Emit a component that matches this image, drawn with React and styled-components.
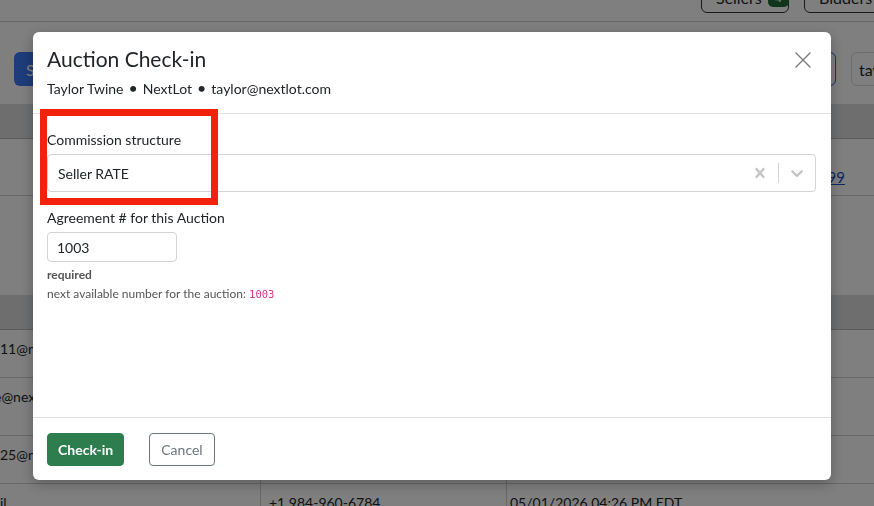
import React from 'react';
import styled, { createGlobalStyle } from 'styled-components';

const Global = createGlobalStyle`
  html, body { margin: 0; padding: 0; overflow: hidden; }
  body { font-family: Lato, "Open Sans", sans-serif; color: #212529; background: #fff; }
  * { box-sizing: border-box; }
`;

/* ---------- page behind the dialog ---------- */

const Page = styled.div`
  width: 874px;
  height: 506px;
  overflow: hidden;
`;

const TopBar = styled.div`
  height: 22px;
  border-bottom: 1px solid #d0d0d0;
  display: flex;
  justify-content: flex-end;
  align-items: flex-end;
  gap: 15px;
  padding-bottom: 8px;
  margin-right: -40px;
  overflow: hidden;
`;

const PillButton = styled.div`
  height: 32px;
  flex: none;
  padding: 0 8px 0 14px;
  border: 1px solid #333;
  border-radius: 6px;
  display: flex;
  align-items: center;
  gap: 6px;
  font-size: 16px;
  width: ${p => p.$w}px;
`;

const Badge = styled.span`
  background: #1e6b3a;
  color: #fff;
  border-radius: 5px;
  font-size: 12px;
  font-weight: 700;
  padding: 2px 7px;
`;

const Controls = styled.div`
  margin-top: 30px;
  height: 34px;
  display: flex;
  align-items: stretch;
  padding-left: 14px;
  margin-right: -60px;
`;

const PrimaryButton = styled.div`
  background: #3a78f2;
  color: #fff;
  border-radius: 6px;
  padding: 0 12px;
  display: flex;
  align-items: center;
  font-size: 16px;
`;

const Spacer = styled.div`
  flex: 1;
`;

const OutlineButton = styled.div`
  border: 1px solid #2f5fd0;
  border-radius: 6px;
  width: 90px;
`;

const SearchBox = styled.div`
  margin-left: 15px;
  width: 83px;
  border: 1px solid #d8d8d8;
  border-radius: 6px;
  padding: 0 7px;
  display: flex;
  align-items: center;
  font-size: 16px;
  overflow: hidden;
  white-space: nowrap;
`;

const TableHead = styled.div`
  height: 35px;
  background: #dcdddf;
  border-bottom: 1px solid #b8b8b8;
  margin-top: ${p => p.$top}px;
`;

const Row = styled.div`
  display: grid;
  grid-template-columns: 260px 246px 1fr;
  height: ${p => p.$h}px;
  border-bottom: 1px solid #d0d0d0;
  font-size: 14px;
`;

const Cell = styled.div`
  padding: 10px 8px 0 ${p => p.$pl}px;
  border-left: ${p => (p.$pl === 0 ? 'none' : '1px solid #d0d0d0')};
  white-space: nowrap;
  overflow: hidden;
  text-indent: ${p => p.$indent || 0}px;
`;

const LinkRow = styled.div`
  height: 57px;
  border-bottom: 1px solid #d0d0d0;
  display: flex;
  justify-content: flex-end;
  align-items: center;
  padding: 20px 29px 0 0;
  font-size: 15px;
`;

const Link = styled.a`
  color: #1d4fc4;
  text-decoration: underline;
`;

/* ---------- dialog ---------- */

const Backdrop = styled.div`
  position: fixed;
  inset: 0;
  background: rgba(0, 0, 0, 0.5);
`;

const Modal = styled.div`
  position: fixed;
  top: 32px;
  left: 33px;
  width: 798px;
  height: 448px;
  background: #fff;
  border-radius: 6px;
  box-shadow: 0 4px 14px rgba(0, 0, 0, 0.28);
  display: flex;
  flex-direction: column;
`;

const Header = styled.div`
  position: relative;
  padding: 14px 14px 14px;
  border-bottom: 1px solid #dee2e6;
`;

const Title = styled.h1`
  margin: 0;
  font-size: 21px;
  line-height: 26px;
  font-weight: 400;
`;

const Subtitle = styled.div`
  margin-top: 6px;
  font-size: 14px;
  line-height: 20px;
`;

const Dot = styled.span`
  margin: 0 5px;
  font-size: 16px;
`;

const CloseButton = styled.button`
  position: absolute;
  top: 20px;
  right: 20px;
  width: 16px;
  height: 16px;
  padding: 0;
  border: 0;
  background: none;
  display: flex;
`;

const Body = styled.div`
  flex: 1;
  padding: 15px 15px 0 14px;
`;

const Label = styled.div`
  font-size: 14px;
  line-height: 21px;
  margin-bottom: 4px;
`;

const Field = styled.div`
  margin-bottom: 15px;
`;

const SelectControl = styled.div`
  height: 38px;
  border: 1px solid #d4d4d4;
  border-radius: 4px;
  display: flex;
  align-items: center;
`;

const SelectValue = styled.div`
  flex: 1;
  padding: 2px 10px;
  font-size: 14px;
`;

const Indicator = styled.div`
  padding: 8px;
  display: flex;
  color: #c4c4c4;
`;

const Separator = styled.span`
  width: 1px;
  align-self: stretch;
  margin: 8px 0;
  background: #d4d4d4;
`;

const TextInput = styled.div`
  width: 130px;
  height: 30px;
  border: 1px solid #d4d4d4;
  border-radius: 4px;
  padding: 0 9px;
  display: flex;
  align-items: center;
  font-size: 14px;
`;

const Required = styled.div`
  margin-top: 4px;
  font-size: 12px;
  line-height: 18px;
  font-weight: 700;
  color: #555;
`;

const Hint = styled.div`
  font-size: 12px;
  line-height: 19px;
  color: #555;
`;

const Code = styled.code`
  font-family: "DejaVu Sans Mono", "Liberation Mono", monospace;
  font-size: 10.5px;
  color: #d63384;
`;

const Footer = styled.div`
  height: 63px;
  border-top: 1px solid #dee2e6;
  padding: 0 14px;
  display: flex;
  align-items: center;
  gap: 25px;
`;

const Button = styled.button`
  height: 33px;
  padding: 0 ${p => (p.$primary ? 10 : 11)}px;
  border-radius: 4px;
  font-family: inherit;
  font-size: 14px;
  font-weight: ${p => (p.$primary ? 700 : 400)};
  background: ${p => (p.$primary ? '#2e7d4f' : '#fff')};
  color: ${p => (p.$primary ? '#fff' : '#6c757d')};
  border: 1px solid ${p => (p.$primary ? '#2e7d4f' : '#6c757d')};
`;

const Highlight = styled.div`
  position: fixed;
  left: 40px;
  top: 109px;
  width: 178px;
  height: 96px;
  border: 7px solid #f2220d;
  pointer-events: none;
`;

const ClearIcon = () => (
  <svg width="20" height="20" viewBox="0 0 20 20" fill="currentColor">
    <path d="M14.348 14.849c-0.469 0.469-1.229 0.469-1.697 0l-2.651-3.030-2.651 3.029c-0.469 0.469-1.229 0.469-1.697 0-0.469-0.469-0.469-1.229 0-1.697l2.758-3.15-2.759-3.152c-0.469-0.469-0.469-1.228 0-1.697s1.228-0.469 1.697 0l2.652 3.031 2.651-3.031c0.469-0.469 1.228-0.469 1.697 0s0.469 1.229 0 1.697l-2.758 3.152 2.758 3.15c0.469 0.469 0.469 1.229 0 1.698z" />
  </svg>
);

const ChevronIcon = () => (
  <svg width="20" height="20" viewBox="0 0 20 20" fill="currentColor">
    <path d="M4.516 7.548c0.436-0.446 1.043-0.481 1.576 0l3.908 3.747 3.908-3.747c0.533-0.481 1.141-0.446 1.574 0 0.436 0.445 0.408 1.197 0 1.615-0.406 0.418-4.695 4.502-4.695 4.502-0.217 0.223-0.502 0.335-0.787 0.335s-0.57-0.112-0.789-0.335c0 0-4.287-4.084-4.695-4.502s-0.436-1.17 0-1.615z" />
  </svg>
);

const CloseIcon = () => (
  <svg width="16" height="16" viewBox="0 0 16 16" stroke="#7a7a7a" strokeWidth="1.4" strokeLinecap="round">
    <line x1="1" y1="1" x2="15" y2="15" />
    <line x1="15" y1="1" x2="1" y2="15" />
  </svg>
);

const rows = [
  { h: 48, email: '11@nextlot.com', phone: '+1 984-960-1120', date: '05/01/2026 04:10 PM EDT' },
  { h: 58, email: 'e@nextlot.com', indent: -6, phone: '+1 984-960-2231', date: '05/01/2026 04:14 PM EDT' },
  { h: 48, email: '25@nextlot.com', phone: '+1 984-960-5525', date: '05/01/2026 04:20 PM EDT' },
  { h: 48, email: 'il', phone: '+1 984-960-6784', date: '05/01/2026 04:26 PM EDT' },
];

export default function App() {
  return (
    <>
      <Global />
      <Page>
        <TopBar>
          <PillButton $w={88}>Sellers <Badge>4</Badge></PillButton>
          <PillButton $w={110}>Bidders <Badge>2</Badge></PillButton>
        </TopBar>
        <Controls>
          <PrimaryButton>Search</PrimaryButton>
          <Spacer />
          <OutlineButton />
          <SearchBox>taylor</SearchBox>
        </Controls>
        <TableHead $top={18} />
        <LinkRow><Link href="#">984-960-6799</Link></LinkRow>
        <TableHead $top={99} />
        {rows.map((r, i) => (
          <Row key={i} $h={r.h}>
            <Cell $pl={0} $indent={r.indent}>{r.email}</Cell>
            <Cell $pl={8}>{r.phone}</Cell>
            <Cell $pl={3}>{r.date}</Cell>
          </Row>
        ))}
      </Page>

      <Backdrop />
      <Modal>
        <Header>
          <Title>Auction Check-in</Title>
          <Subtitle>
            Taylor Twine<Dot>•</Dot>NextLot<Dot>•</Dot>taylor@nextlot.com
          </Subtitle>
          <CloseButton aria-label="Close"><CloseIcon /></CloseButton>
        </Header>
        <Body>
          <Field>
            <Label>Commission structure</Label>
            <SelectControl>
              <SelectValue>Seller RATE</SelectValue>
              <Indicator><ClearIcon /></Indicator>
              <Separator />
              <Indicator><ChevronIcon /></Indicator>
            </SelectControl>
          </Field>
          <Field>
            <Label>Agreement # for this Auction</Label>
            <TextInput>1003</TextInput>
            <Required>required</Required>
            <Hint>next available number for the auction: <Code>1003</Code></Hint>
          </Field>
        </Body>
        <Footer>
          <Button $primary>Check-in</Button>
          <Button>Cancel</Button>
        </Footer>
      </Modal>
      <Highlight />
    </>
  );
}
